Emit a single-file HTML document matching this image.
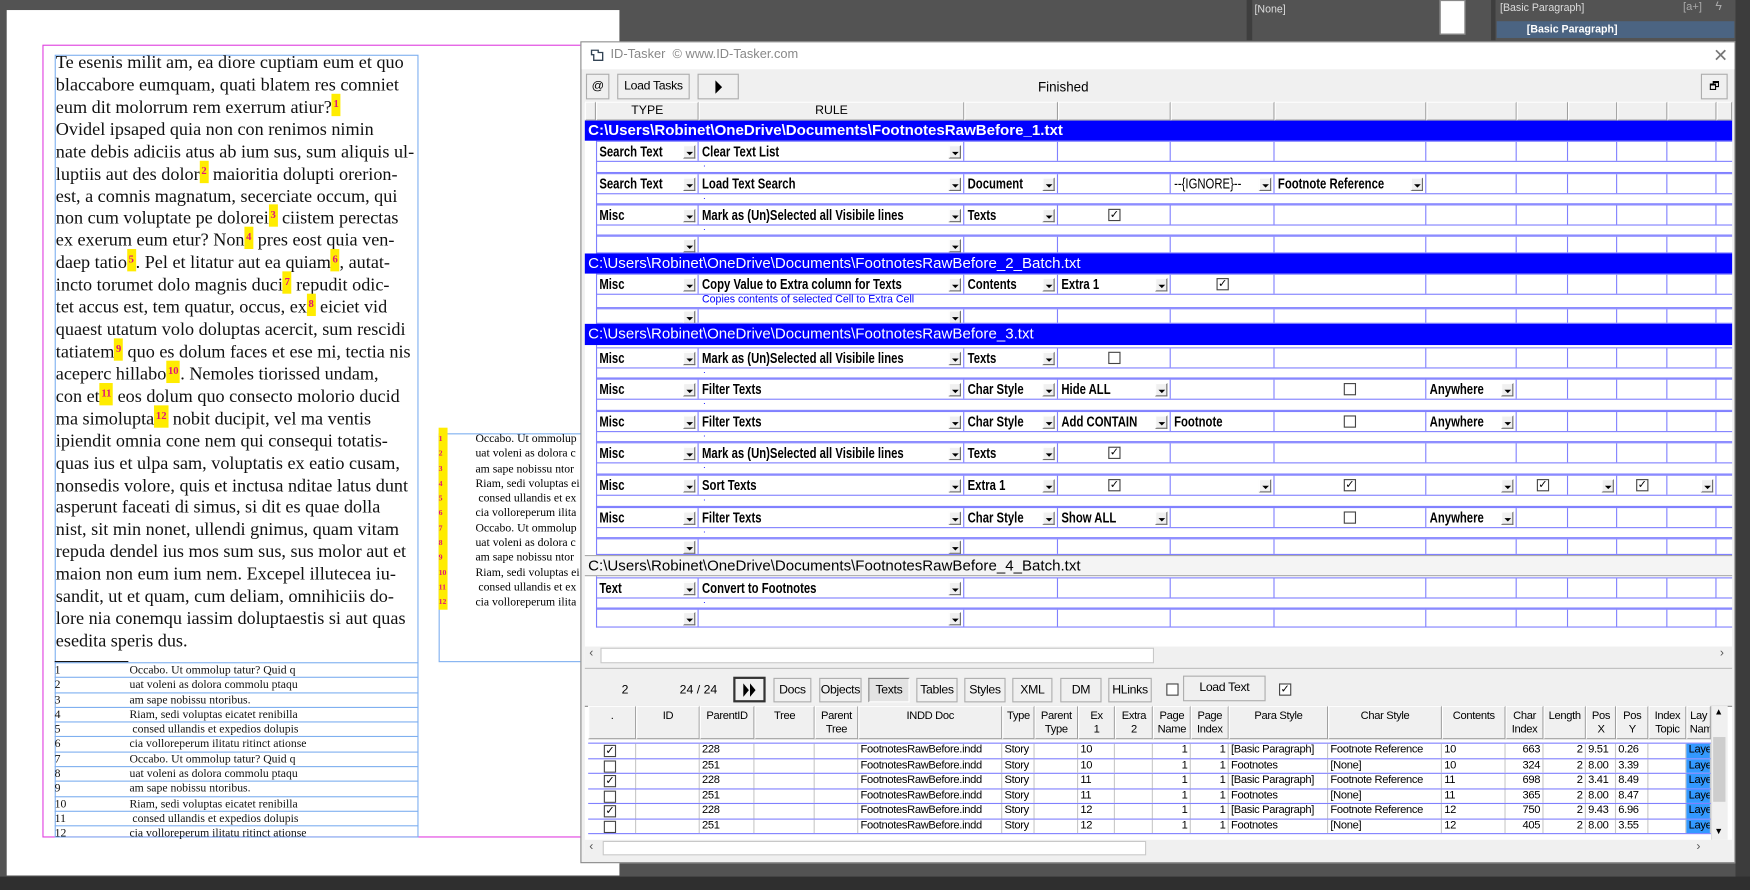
<!DOCTYPE html>
<html><head><meta charset="utf-8"><style>
*{margin:0;padding:0;box-sizing:border-box}
html,body{width:1750px;height:890px;overflow:hidden;background:#535353}
.s{position:absolute;left:0;top:0;width:1568px;height:797px;transform:scale(1.11607,1.1167);transform-origin:0 0;font-family:"Liberation Sans",sans-serif}
.a{position:absolute}
.body{font-family:"Liberation Serif",serif;font-size:16.3px;line-height:19.92px;color:#111;white-space:nowrap}
.fn{background:#ffec00;color:#e0157a;font-size:9.5px;font-weight:bold;line-height:0;padding:5px 1.5px 5px;position:relative;top:-5px}
.ft{font-family:"Liberation Serif",serif;font-size:10.5px;color:#111;white-space:nowrap}
.ft div{height:13.3px;line-height:13px;border-bottom:1px solid #7fb0f0;position:relative}
.ft span{position:absolute;left:67px}
.dlg{font-family:"Liberation Sans",sans-serif}
.r{position:absolute;left:534px;width:1018px;height:19px;display:flex;border-bottom:1px solid #8080ff;border-top:1px solid #8080ff}
.r>div{border-right:1px solid #8080ff;position:relative;flex:none;white-space:nowrap;overflow:hidden;font-weight:bold;font-size:13px;line-height:17px;padding-left:3px;color:#000}
.r b{display:inline-block;transform:scaleX(.78);transform-origin:0 0}
.r>div:nth-child(1){width:92px}.r>div:nth-child(2){width:238px}.r>div:nth-child(3){width:84px}.r>div:nth-child(4){width:101px}.r>div:nth-child(5){width:93px}.r>div:nth-child(6){width:136px}.r>div:nth-child(7){width:81px}.r>div:nth-child(8){width:46px}.r>div:nth-child(9){width:44px}.r>div:nth-child(10){width:45px}.r>div:nth-child(11){width:44px}.r>div:nth-child(12){width:14px;border-right:none}
.n b{font-weight:normal}
.sr{position:absolute;left:534px;width:1018px;border-bottom:1px solid #8080ff;font-size:8px;color:#0000ff}
.sr span{position:absolute;left:96px;top:-3px}
.dd{position:absolute;right:2px;top:3px;width:11px;height:12px;background:#f0f0f0;border:1px solid;border-color:#fff #6a6a6a #6a6a6a #fff}
.dd::after{content:"";position:absolute;left:2px;top:5px;border-left:3px solid transparent;border-right:3px solid transparent;border-top:3px solid #000}
.cb{position:absolute;top:3px;width:11px;height:11px;border:1px solid #444;background:#fff;font-size:10px;line-height:9px;text-align:center;font-weight:bold;font-family:"DejaVu Sans",sans-serif}
.band{position:absolute;left:524px;width:1028px;background:#0000ff;color:#fff;font-size:13.5px;line-height:18px;padding-left:3px;white-space:nowrap;font-family:"Liberation Sans",sans-serif}
.btn{position:absolute;background:#f0f0f0;border:1px solid #adadad;text-align:center;font-size:11px;color:#000;letter-spacing:-0.3px}
.hdr{position:absolute;left:524px;top:91px;height:17px;display:flex;background:#f0f0f0}
.hdr div{border:1px solid;border-color:#fff #a0a0a0 #a0a0a0 #fff;font-size:11px;text-align:center;line-height:15px;flex:none}
.g{display:flex;position:absolute;left:527px}
.g>div{flex:none;border-right:1px solid #c8c8c8;white-space:nowrap;overflow:hidden;padding:0 2px;font-size:10px;letter-spacing:-0.3px;position:relative}
.gh>div{background:#f0f0f0;border:1px solid;border-color:#fff #a0a0a0 #a0a0a0 #fff;text-align:center;line-height:12px;height:30px;padding-top:3px}
.gr{height:13.5px;border-bottom:1px solid #8080ff}
.gr>div{line-height:12.5px}
.gr>div:nth-child(1){text-align:center}
.rt{text-align:right}
.lay{background:#3399ff}
</style></head><body><div class="s">

<div class="a" style="left:1117px;top:0;width:5px;height:36px;background:#3e3e3e"></div>
<div class="a" style="left:1124px;top:3px;font-size:9.5px;color:#ddd">[None]</div>
<div class="a" style="left:1290px;top:0;width:23px;height:31px;background:#fff;border:1px solid #888"></div>
<div class="a" style="left:1336px;top:0;width:4px;height:36px;background:#3e3e3e"></div>
<div class="a" style="left:1344px;top:2px;font-size:9.5px;color:#ddd">[Basic Paragraph]</div>
<div class="a" style="left:1508px;top:1px;font-size:10px;color:#aaa">[a+]</div>
<div class="a" style="left:1537px;top:0px;font-size:11px;color:#aaa">ϟ</div>
<div class="a" style="left:1341px;top:19px;width:213px;height:15px;background:#4b6482;color:#fff;font-size:9.5px;font-weight:bold;padding-left:27px;line-height:15px">[Basic Paragraph]</div>
<div class="a" style="left:1555px;top:0;width:13px;height:797px;background:#3c3c3c"></div>

<div class="a" style="left:6px;top:9px;width:549px;height:775px;background:#fff"></div>
<div class="a" style="left:0;top:785px;width:1568px;height:12px;background:#2f2f2f"></div>
<div class="a" style="left:38px;top:40px;width:500px;height:710px;border:1px solid #e040e0"></div>
<div class="a" style="left:49px;top:49px;width:326px;height:701px;border:1px solid #7fb0f0"></div>

<div class="a body" style="left:50px;top:46px">
Te esenis milit am, ea diore cuptiam eum et quo<br>
blaccabore eumquam, quati blatem res comniet<br>
eum dit molorrum rem exerrum atiur?<span class="fn">1</span><br>
Ovidel ipsaped quia non con renimos nimin<br>
nate debis adiciis atus ab ium sus, sum aliquis ul-<br>
luptiis aut des dolor<span class="fn">2</span> maioritia dolupti orerion-<br>
est, a comnis magnatum, secerciate occum, qui<br>
non cum voluptate pe dolorei<span class="fn">3</span> ciistem perectas<br>
ex exerum eum etur? Non<span class="fn">4</span> pres eost quia ven-<br>
daep tatio<span class="fn">5</span>. Pel et litatur aut ea quiam<span class="fn">6</span>, autat-<br>
incto torumet dolo magnis duci<span class="fn">7</span> repudit odic-<br>
tet accus est, tem quatur, occus, ex<span class="fn">8</span> eiciet vid<br>
quaest utatum volo doluptas acercit, sum rescidi<br>
tatiatem<span class="fn">9</span> quo es dolum faces et ese mi, tectia nis<br>
aceperc hillabo<span class="fn">10</span>. Nemoles tiorissed undam,<br>
con et<span class="fn">11</span> eos dolum quo consecto molorio ducid<br>
ma simolupta<span class="fn">12</span> nobit ducipit, vel ma ventis<br>
ipiendit omnia cone nem qui consequi totatis-<br>
quas ius et ulpa sam, voluptatis ex eatio cusam,<br>
nonsedis volore, quis et inctusa nditae latus dunt<br>
asperunt faceati di simus, si dit es quae dolla<br>
nist, sit min nonet, ullendi gnimus, quam vitam<br>
repuda dendel ius mos sum sus, sus molor aut et<br>
maion non eum ium nem. Excepel illutecea iu-<br>
sandit, ut et quam, cum deliam, omnihiciis do-<br>
lore nia conemqu iassim doluptaestis si aut quas<br>
esedita speris dus.
</div>
<div class="a" style="left:49px;top:592px;width:66px;height:1px;background:#000"></div>
<div class="a ft" style="left:49px;top:593px;width:326px;border-top:1px solid #7fb0f0">
<div>1<span>Occabo. Ut ommolup tatur? Quid q</span></div>
<div>2<span>uat voleni as dolora commolu ptaqu</span></div>
<div>3<span>am sape nobissu ntoribus.</span></div>
<div>4<span>Riam, sedi voluptas eicatet renibilla</span></div>
<div>5<span>&nbsp;consed ullandis et expedios dolupis</span></div>
<div>6<span>cia volloreperum ilitatu ritinct ationse</span></div>
<div>7<span>Occabo. Ut ommolup tatur? Quid q</span></div>
<div>8<span>uat voleni as dolora commolu ptaqu</span></div>
<div>9<span>am sape nobissu ntoribus.</span></div>
<div>10<span>Riam, sedi voluptas eicatet renibilla</span></div>
<div>11<span>&nbsp;consed ullandis et expedios dolupis</span></div>
<div style="border:none">12<span>cia volloreperum ilitatu ritinct ationse</span></div>
</div>
<div class="a" style="left:393px;top:388px;width:140px;height:205px;border:1px solid #7fb0f0"></div>
<div class="a" style="left:393px;top:383px;width:8px;height:163px;background:#ffec00"></div>
<div class="a" style="left:393px;top:387px;font-size:7px;font-weight:bold;color:#e0157a;line-height:13.3px;font-family:'Liberation Serif',serif">1<br>2<br>3<br>4<br>5<br>6<br>7<br>8<br>9<br>10<br>11<br>12</div>
<div class="a" style="left:426px;top:387px;font-size:10.5px;line-height:13.3px;font-family:'Liberation Serif',serif;white-space:nowrap">Occabo. Ut ommolup<br>uat voleni as dolora c<br>am sape nobissu ntor<br>Riam, sedi voluptas ei<br>&nbsp;consed ullandis et ex<br>cia volloreperum ilita<br>Occabo. Ut ommolup<br>uat voleni as dolora c<br>am sape nobissu ntor<br>Riam, sedi voluptas ei<br>&nbsp;consed ullandis et ex<br>cia volloreperum ilita</div>

<div class="a dlg" style="left:520px;top:37px;width:1035px;height:736px;background:#f0f0f0;border:1px solid #8a8a8a;overflow:hidden"></div>
<div class="a" style="left:521px;top:38px;width:1033px;height:24px;background:#fff"></div>
<svg class="a" style="left:529px;top:43px" width="12" height="12" viewBox="0 0 12 12"><path d="M1 2h6v2h4v7H3V6H1z" fill="none" stroke="#345" stroke-width="1.2"/></svg>
<div class="a" style="left:547px;top:43px;font-size:11.5px;color:#888;font-family:'Liberation Sans',sans-serif">ID-Tasker&nbsp;&nbsp;© www.ID-Tasker.com</div>
<div class="a" style="left:1535px;top:40px;font-size:16px;color:#777;font-weight:100">✕</div>

<div class="dlg">
<div class="btn" style="left:525px;top:66px;width:21px;height:23px;line-height:21px">@</div>
<div class="btn" style="left:553px;top:66px;width:65px;height:23px;line-height:21px">Load Tasks</div>
<div class="btn" style="left:625px;top:66px;width:37px;height:23px"><svg width="10" height="12" style="margin-top:5px"><path d="M2 0L8 6L2 12z" fill="#000"/></svg></div>
<div class="a" style="left:930px;top:71px;font-size:12px">Finished</div>
<div class="btn" style="left:1524px;top:66px;width:24px;height:23px;font-size:10px;line-height:21px">🗗</div>

<div class="a" style="left:524px;top:91px;width:1028px;height:504px;background:#fff;border-top:1px solid #888"></div>
<div class="hdr"><div style="width:10px"></div><div style="width:92px">TYPE</div><div style="width:238px">RULE</div><div style="width:84px"></div><div style="width:101px"></div><div style="width:93px"></div><div style="width:136px"></div><div style="width:81px"></div><div style="width:46px"></div><div style="width:44px"></div><div style="width:45px"></div><div style="width:44px"></div><div style="width:14px"></div></div>
<div class="a" style="left:534px;top:108px;width:1px;height:454px;background:#8080ff"></div>

<div class="band" style="top:108px;height:18px;font-weight:bold">C:\Users\Robinet\OneDrive\Documents\FootnotesRawBefore_1.txt</div>
<div class="r" style="top:126px"><div><b>Search Text</b><i class="dd"></i></div><div><b>Clear Text List</b><i class="dd"></i></div><div></div><div></div><div></div><div></div><div></div><div></div><div></div><div></div><div></div><div></div></div>
<div class="sr" style="top:145px;height:10px"><span>.</span></div>
<div class="r" style="top:155px"><div><b>Search Text</b><i class="dd"></i></div><div><b>Load Text Search</b><i class="dd"></i></div><div><b>Document</b><i class="dd"></i></div><div></div><div class="n"><b>--{IGNORE}--</b><i class="dd"></i></div><div><b>Footnote Reference</b><i class="dd"></i></div><div></div><div></div><div></div><div></div><div></div><div></div></div>
<div class="sr" style="top:174px;height:9px"><span>.</span></div>
<div class="r" style="top:183px"><div><b>Misc</b><i class="dd"></i></div><div><b>Mark as (Un)Selected all Visibile lines</b><i class="dd"></i></div><div><b>Texts</b><i class="dd"></i></div><div><i class="cb" style="left:45px">✓</i></div><div></div><div></div><div></div><div></div><div></div><div></div><div></div><div></div></div>
<div class="sr" style="top:202px;height:9px"><span>.</span></div>
<div class="r" style="top:211px;height:16px"><div><i class="dd" style="top:2px"></i></div><div><i class="dd" style="top:2px"></i></div><div></div><div></div><div></div><div></div><div></div><div></div><div></div><div></div><div></div><div></div></div>

<div class="band" style="top:227px;height:18px">C:\Users\Robinet\OneDrive\Documents\FootnotesRawBefore_2_Batch.txt</div>
<div class="r" style="top:245px"><div><b>Misc</b><i class="dd"></i></div><div><b>Copy Value to Extra column for Texts</b><i class="dd"></i></div><div><b>Contents</b><i class="dd"></i></div><div><b>Extra 1</b><i class="dd"></i></div><div><i class="cb" style="left:41px">✓</i></div><div></div><div></div><div></div><div></div><div></div><div></div><div></div></div>
<div class="sr" style="top:264px;height:12px"><span style="top:-1px;font-size:9.5px;left:95px">Copies contents of selected Cell to Extra Cell</span></div>
<div class="r" style="top:276px;height:14px"><div><i class="dd" style="top:1px"></i></div><div><i class="dd" style="top:1px"></i></div><div></div><div></div><div></div><div></div><div></div><div></div><div></div><div></div><div></div><div></div></div>

<div class="band" style="top:290px;height:19px">C:\Users\Robinet\OneDrive\Documents\FootnotesRawBefore_3.txt</div>
<div class="r" style="top:311px"><div><b>Misc</b><i class="dd"></i></div><div><b>Mark as (Un)Selected all Visibile lines</b><i class="dd"></i></div><div><b>Texts</b><i class="dd"></i></div><div><i class="cb" style="left:45px"></i></div><div></div><div></div><div></div><div></div><div></div><div></div><div></div><div></div></div>
<div class="sr" style="top:330px;height:9px"><span>.</span></div>
<div class="r" style="top:339px"><div><b>Misc</b><i class="dd"></i></div><div><b>Filter Texts</b><i class="dd"></i></div><div><b>Char Style</b><i class="dd"></i></div><div><b>Hide ALL</b><i class="dd"></i></div><div></div><div><i class="cb" style="left:62px"></i></div><div><b>Anywhere</b><i class="dd"></i></div><div></div><div></div><div></div><div></div><div></div></div>
<div class="sr" style="top:358px;height:10px"><span>.</span></div>
<div class="r" style="top:368px"><div><b>Misc</b><i class="dd"></i></div><div><b>Filter Texts</b><i class="dd"></i></div><div><b>Char Style</b><i class="dd"></i></div><div><b>Add CONTAIN</b><i class="dd"></i></div><div><b>Footnote</b></div><div><i class="cb" style="left:62px"></i></div><div><b>Anywhere</b><i class="dd"></i></div><div></div><div></div><div></div><div></div><div></div></div>
<div class="sr" style="top:387px;height:9px"><span>.</span></div>
<div class="r" style="top:396px"><div><b>Misc</b><i class="dd"></i></div><div><b>Mark as (Un)Selected all Visibile lines</b><i class="dd"></i></div><div><b>Texts</b><i class="dd"></i></div><div><i class="cb" style="left:45px">✓</i></div><div></div><div></div><div></div><div></div><div></div><div></div><div></div><div></div></div>
<div class="sr" style="top:415px;height:10px"><span>.</span></div>
<div class="r" style="top:425px"><div><b>Misc</b><i class="dd"></i></div><div><b>Sort Texts</b><i class="dd"></i></div><div><b>Extra 1</b><i class="dd"></i></div><div><i class="cb" style="left:45px">✓</i></div><div><i class="dd"></i></div><div><i class="cb" style="left:62px">✓</i></div><div><i class="dd"></i></div><div><i class="cb" style="left:18px">✓</i></div><div><i class="dd"></i></div><div><i class="cb" style="left:17px">✓</i></div><div><i class="dd"></i></div><div></div></div>
<div class="sr" style="top:444px;height:10px"><span>.</span></div>
<div class="r" style="top:454px"><div><b>Misc</b><i class="dd"></i></div><div><b>Filter Texts</b><i class="dd"></i></div><div><b>Char Style</b><i class="dd"></i></div><div><b>Show ALL</b><i class="dd"></i></div><div></div><div><i class="cb" style="left:62px"></i></div><div><b>Anywhere</b><i class="dd"></i></div><div></div><div></div><div></div><div></div><div></div></div>
<div class="sr" style="top:473px;height:9px"><span>.</span></div>
<div class="r" style="top:482px;height:15px"><div><i class="dd" style="top:1px"></i></div><div><i class="dd" style="top:1px"></i></div><div></div><div></div><div></div><div></div><div></div><div></div><div></div><div></div><div></div><div></div></div>

<div class="band" style="top:497px;height:19px;background:#f4f4f4;color:#000;border-top:1px solid #aaa;border-bottom:1px solid #aaa">C:\Users\Robinet\OneDrive\Documents\FootnotesRawBefore_4_Batch.txt</div>
<div class="r" style="top:517px"><div><b>Text</b><i class="dd"></i></div><div><b>Convert to Footnotes</b><i class="dd"></i></div><div></div><div></div><div></div><div></div><div></div><div></div><div></div><div></div><div></div><div></div></div>
<div class="sr" style="top:536px;height:9px"><span>.</span></div>
<div class="r" style="top:545px;height:17px"><div><i class="dd" style="top:2px"></i></div><div><i class="dd" style="top:2px"></i></div><div></div><div></div><div></div><div></div><div></div><div></div><div></div><div></div><div></div><div></div></div>

<div class="a" style="left:524px;top:579px;width:1028px;height:16px;background:#f0f0f0"></div>
<div class="a" style="left:538px;top:580px;width:496px;height:14px;background:#fff;border:1px solid #c8c8c8"></div>
<div class="a" style="left:528px;top:579px;font-size:11px;color:#555">‹</div>
<div class="a" style="left:1541px;top:579px;font-size:11px;color:#555">›</div>

<div class="a" style="left:524px;top:598px;width:1028px;height:1px;background:#fff;border-top:1px solid #bbb"></div>
<div class="a" style="left:557px;top:612px;font-size:11px">2</div>
<div class="a" style="left:609px;top:612px;font-size:11px">24 / 24</div>
<div class="btn" style="left:657px;top:606px;width:29px;height:23px;border:2px solid #333;background:#f0f0f0"><svg width="14" height="12" style="margin-top:4px"><path d="M1 0L6 6L1 12zM7 0L12 6L7 12z" fill="#000"/></svg></div>
<div class="btn" style="left:693px;top:607px;width:34px;height:22px;line-height:20px">Docs</div>
<div class="btn" style="left:734px;top:607px;width:38px;height:22px;line-height:20px">Objects</div>
<div class="btn" style="left:778px;top:607px;width:37px;height:22px;line-height:20px;background:#e3e3e3;border-color:#888 #fff #fff #888">Texts</div>
<div class="btn" style="left:821px;top:607px;width:37px;height:22px;line-height:20px">Tables</div>
<div class="btn" style="left:864px;top:607px;width:37px;height:22px;line-height:20px">Styles</div>
<div class="btn" style="left:907px;top:607px;width:36px;height:22px;line-height:20px">XML</div>
<div class="btn" style="left:950px;top:607px;width:37px;height:22px;line-height:20px">DM</div>
<div class="btn" style="left:993px;top:607px;width:39px;height:22px;line-height:20px">HLinks</div>
<i class="cb" style="left:1045px;top:612px"></i>
<div class="btn" style="left:1060px;top:605px;width:74px;height:23px;line-height:20px">Load Text</div>
<i class="cb" style="left:1146px;top:612px">✓</i>

<div class="a" style="left:524px;top:632px;width:1028px;height:134px;background:#fff;border-top:1px solid #888"></div>
<div class="g gh" style="top:632px"><div style="width:43px">.</div><div style="width:57px">ID</div><div style="width:49px">ParentID</div><div style="width:54px">Tree</div><div style="width:39px">Parent<br>Tree</div><div style="width:129px">INDD Doc</div><div style="width:29px">Type</div><div style="width:39px">Parent<br>Type</div><div style="width:33px">Ex<br>1</div><div style="width:34px">Extra<br>2</div><div style="width:34px">Page<br>Name</div><div style="width:34px">Page<br>Index</div><div style="width:89px">Para Style</div><div style="width:102px">Char Style</div><div style="width:57px">Contents</div><div style="width:34px">Char<br>Index</div><div style="width:38px">Length</div><div style="width:27px">Pos<br>X</div><div style="width:29px">Pos<br>Y</div><div style="width:34px">Index<br>Topic</div><div style="width:22px">Lay<br>Nam</div></div>
<div class="a" style="left:527px;top:662px;width:1006px;height:4px;border-bottom:1px solid #8080ff"></div>

<div class="a" style="left:527px;top:666px">
<div class="g gr" style="position:relative;left:0"><div style="width:43px"><i class="cb" style="left:14px;top:1px">✓</i></div><div style="width:57px"></div><div style="width:49px">228</div><div style="width:54px"></div><div style="width:39px"></div><div style="width:129px">FootnotesRawBefore.indd</div><div style="width:29px">Story</div><div style="width:39px"></div><div style="width:33px">10</div><div style="width:34px"></div><div style="width:34px" class="rt">1</div><div style="width:34px" class="rt">1</div><div style="width:89px">[Basic Paragraph]</div><div style="width:102px">Footnote Reference</div><div style="width:57px">10</div><div style="width:34px" class="rt">663</div><div style="width:38px" class="rt">2</div><div style="width:27px">9.51</div><div style="width:29px">0.26</div><div style="width:34px"></div><div style="width:22px" class="lay">Layer</div></div>
<div class="g gr" style="position:relative;left:0"><div style="width:43px"><i class="cb" style="left:14px;top:1px"></i></div><div style="width:57px"></div><div style="width:49px">251</div><div style="width:54px"></div><div style="width:39px"></div><div style="width:129px">FootnotesRawBefore.indd</div><div style="width:29px">Story</div><div style="width:39px"></div><div style="width:33px">10</div><div style="width:34px"></div><div style="width:34px" class="rt">1</div><div style="width:34px" class="rt">1</div><div style="width:89px">Footnotes</div><div style="width:102px">[None]</div><div style="width:57px">10</div><div style="width:34px" class="rt">324</div><div style="width:38px" class="rt">2</div><div style="width:27px">8.00</div><div style="width:29px">3.39</div><div style="width:34px"></div><div style="width:22px" class="lay">Layer</div></div>
<div class="g gr" style="position:relative;left:0"><div style="width:43px"><i class="cb" style="left:14px;top:1px">✓</i></div><div style="width:57px"></div><div style="width:49px">228</div><div style="width:54px"></div><div style="width:39px"></div><div style="width:129px">FootnotesRawBefore.indd</div><div style="width:29px">Story</div><div style="width:39px"></div><div style="width:33px">11</div><div style="width:34px"></div><div style="width:34px" class="rt">1</div><div style="width:34px" class="rt">1</div><div style="width:89px">[Basic Paragraph]</div><div style="width:102px">Footnote Reference</div><div style="width:57px">11</div><div style="width:34px" class="rt">698</div><div style="width:38px" class="rt">2</div><div style="width:27px">3.41</div><div style="width:29px">8.49</div><div style="width:34px"></div><div style="width:22px" class="lay">Layer</div></div>
<div class="g gr" style="position:relative;left:0"><div style="width:43px"><i class="cb" style="left:14px;top:1px"></i></div><div style="width:57px"></div><div style="width:49px">251</div><div style="width:54px"></div><div style="width:39px"></div><div style="width:129px">FootnotesRawBefore.indd</div><div style="width:29px">Story</div><div style="width:39px"></div><div style="width:33px">11</div><div style="width:34px"></div><div style="width:34px" class="rt">1</div><div style="width:34px" class="rt">1</div><div style="width:89px">Footnotes</div><div style="width:102px">[None]</div><div style="width:57px">11</div><div style="width:34px" class="rt">365</div><div style="width:38px" class="rt">2</div><div style="width:27px">8.00</div><div style="width:29px">8.47</div><div style="width:34px"></div><div style="width:22px" class="lay">Layer</div></div>
<div class="g gr" style="position:relative;left:0"><div style="width:43px"><i class="cb" style="left:14px;top:1px">✓</i></div><div style="width:57px"></div><div style="width:49px">228</div><div style="width:54px"></div><div style="width:39px"></div><div style="width:129px">FootnotesRawBefore.indd</div><div style="width:29px">Story</div><div style="width:39px"></div><div style="width:33px">12</div><div style="width:34px"></div><div style="width:34px" class="rt">1</div><div style="width:34px" class="rt">1</div><div style="width:89px">[Basic Paragraph]</div><div style="width:102px">Footnote Reference</div><div style="width:57px">12</div><div style="width:34px" class="rt">750</div><div style="width:38px" class="rt">2</div><div style="width:27px">9.43</div><div style="width:29px">6.96</div><div style="width:34px"></div><div style="width:22px" class="lay">Layer</div></div>
<div class="g gr" style="position:relative;left:0"><div style="width:43px"><i class="cb" style="left:14px;top:1px"></i></div><div style="width:57px"></div><div style="width:49px">251</div><div style="width:54px"></div><div style="width:39px"></div><div style="width:129px">FootnotesRawBefore.indd</div><div style="width:29px">Story</div><div style="width:39px"></div><div style="width:33px">12</div><div style="width:34px"></div><div style="width:34px" class="rt">1</div><div style="width:34px" class="rt">1</div><div style="width:89px">Footnotes</div><div style="width:102px">[None]</div><div style="width:57px">12</div><div style="width:34px" class="rt">405</div><div style="width:38px" class="rt">2</div><div style="width:27px">8.00</div><div style="width:29px">3.55</div><div style="width:34px"></div><div style="width:22px" class="lay">Layer</div></div>
</div>
<div class="a" style="left:1533px;top:632px;width:15px;height:120px;background:#f0f0f0;border-left:1px solid #ddd"></div>
<div class="a" style="left:1535px;top:660px;width:11px;height:58px;background:#cdcdcd"></div>
<div class="a" style="left:1536px;top:633px;font-size:8px">▲</div>
<div class="a" style="left:1536px;top:740px;font-size:8px">▼</div>
<div class="a" style="left:524px;top:752px;width:1028px;height:15px;background:#f0f0f0"></div>
<div class="a" style="left:540px;top:753px;width:487px;height:13px;background:#fff;border:1px solid #c8c8c8"></div>
<div class="a" style="left:528px;top:752px;font-size:11px;color:#555">‹</div>
<div class="a" style="left:1520px;top:752px;font-size:11px;color:#555">›</div>
</div>

</div></body></html>
